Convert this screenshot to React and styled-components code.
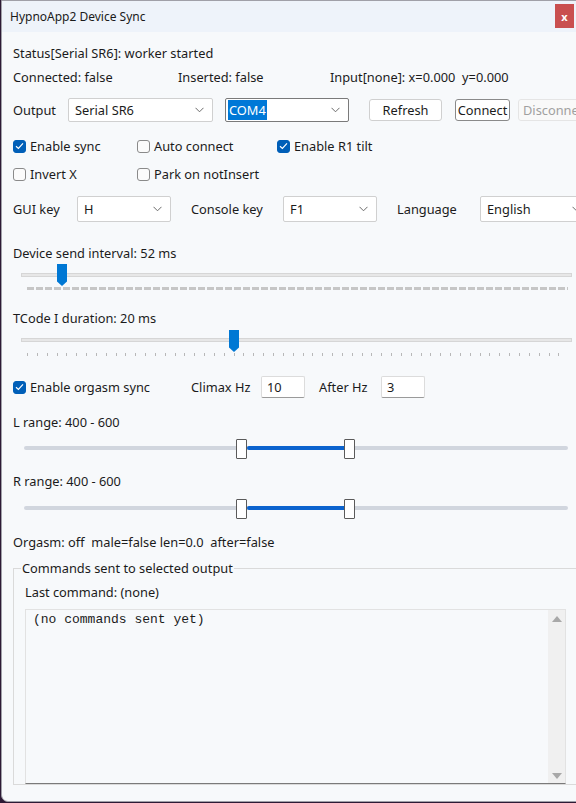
import React from 'react'
import styled, { createGlobalStyle } from 'styled-components'

const GlobalStyle = createGlobalStyle`
  html, body {
    margin: 0;
    padding: 0;
    background: #2d1a35;
    overflow: hidden;
  }
  body {
    font-family: "Noto Sans", "Open Sans", sans-serif;
    font-size: 12.8px;
    color: #1b1b1b;
  }
`

const Window = styled.div`
  margin-left: 1px;
  width: 620px;
  height: 800px;
  background: #f7f9fb;
  border: 1px solid #a0a0a8;
  border-radius: 0 0 7px 7px;
  display: flex;
  flex-direction: column;
  overflow: hidden;
`

const TitleBar = styled.div`
  height: 31px;
  background: #eef3fa;
  display: flex;
  align-items: center;
  padding-left: 8px;
  font-size: 12px;
  position: relative;
`

const CloseBtn = styled.div`
  position: absolute;
  left: 553px;
  top: 3px;
  width: 19px;
  height: 24px;
  background: #c94f4f;
  color: #fff;
  font-size: 11px;
  font-weight: bold;
  display: flex;
  align-items: center;
  justify-content: center;
`

const Content = styled.div`
  display: flex;
  flex-direction: column;
  padding: 0 0 0 11px;
`

const Row = styled.div`
  display: flex;
  align-items: center;
  height: ${p => p.$h || 18}px;
  margin-top: ${p => p.$mt || 0}px;
  white-space: nowrap;
`

const Cell = styled.div`
  width: ${p => p.$w}px;
  flex-shrink: 0;
  white-space: nowrap;
`

const Select = styled.div`
  width: ${p => p.$w}px;
  height: ${p => p.$h || 24}px;
  flex-shrink: 0;
  box-sizing: border-box;
  background: #fff;
  border: 1px solid ${p => (p.$focus ? '#7a7a7a' : '#d0d0d0')};
  border-radius: 2px;
  display: flex;
  align-items: center;
  justify-content: space-between;
  padding: 0 8px 0 ${p => (p.$focus ? 2 : 6)}px;
  margin-right: ${p => p.$mr || 0}px;
`

const Highlight = styled.span`
  background: #0078d7;
  color: #fff;
  padding: 1px 1px;
`

const Button = styled.div`
  height: 22px;
  box-sizing: border-box;
  width: ${p => p.$w}px;
  flex-shrink: 0;
  border: 1px solid ${p => (p.$focus ? '#8a8a8a' : p.$disabled ? '#e5e5e5' : '#d0d0d0')};
  border-radius: 3px;
  background: ${p => (p.$disabled ? '#f9f9f9' : '#fff')};
  color: ${p => (p.$disabled ? '#a0a0a0' : '#1b1b1b')};
  display: flex;
  align-items: center;
  justify-content: ${p => (p.$disabled ? 'flex-start' : 'center')};
  padding-left: ${p => (p.$disabled ? 4 : 0)}px;
  margin-right: ${p => p.$mr || 0}px;
  white-space: nowrap;
  overflow: hidden;
`

const CheckItem = styled.label`
  display: flex;
  align-items: center;
  gap: 4px;
  width: ${p => p.$w}px;
  flex-shrink: 0;
  white-space: nowrap;
`

const Box = styled.span`
  width: 13px;
  height: 13px;
  box-sizing: border-box;
  border-radius: 3px;
  border: 1px solid ${p => (p.$on ? '#005fb8' : '#8a8a8a')};
  background: ${p => (p.$on ? '#005fb8' : '#fbfbfb')};
  display: flex;
  align-items: center;
  justify-content: center;
`

const SliderWrap = styled.div`
  position: relative;
  height: ${p => p.$h}px;
  margin-top: ${p => p.$mt || 0}px;
`

const Track = styled.div`
  position: absolute;
  left: ${p => p.$l}px;
  width: ${p => p.$w}px;
  top: ${p => p.$t}px;
  height: 4px;
  box-sizing: border-box;
  background: ${p => p.$c || '#e7e7e7'};
  border: ${p => (p.$plain ? 'none' : '1px solid #d6d6d6')};
  border-radius: ${p => (p.$plain ? 2 : 0)}px;
`

const Ticks = styled.div`
  position: absolute;
  left: 14px;
  width: 541px;
  top: ${p => p.$t}px;
  height: 3px;
  background: ${p =>
    p.$dense
      ? 'repeating-linear-gradient(90deg, #c6c6c6 0 7px, transparent 7px 9px)'
      : 'repeating-linear-gradient(90deg, #b8b8b8 0 1px, transparent 1px 9.84px)'};
`

const Thumb = styled.div`
  position: absolute;
  top: ${p => p.$t}px;
  width: 10px;
  height: 22px;
  background: #0078d4;
  clip-path: polygon(0 0, 100% 0, 100% 80%, 50% 100%, 0 80%);
`

const RangeThumb = styled.div`
  position: absolute;
  top: ${p => p.$t}px;
  width: 11px;
  height: 20px;
  box-sizing: border-box;
  background: #fff;
  border: 1px solid #5a5a5a;
  border-radius: 1px;
`

const NumInput = styled.div`
  width: ${p => p.$w}px;
  height: 22px;
  box-sizing: border-box;
  background: #fff;
  border: 1px solid #dcdcdc;
  border-bottom-color: #9a9a9a;
  border-radius: 2px;
  padding-left: 5px;
  display: flex;
  align-items: center;
  flex-shrink: 0;
`

const Group = styled.fieldset`
  margin: 8px 0 0 0;
  padding: 0 0 0 11px;
  border: 1px solid #dadada;
  border-right: none;
  display: flex;
  flex-direction: column;
`

const Legend = styled.legend`
  padding: 0 1px;
  margin-left: -4px;
  font-size: 12.8px;
`

const LogBox = styled.div`
  margin-top: 8px;
  width: 541px;
  height: 175px;
  box-sizing: border-box;
  border: 1px solid #e2e2e2;
  border-bottom: 1px solid #7a7a7a;
  display: flex;
`

const LogText = styled.div`
  flex: 1;
  padding: 2px 0 0 7px;
  font-family: "Liberation Mono", "Courier New", monospace;
  font-size: 13px;
`

const ScrollBar = styled.div`
  width: 17px;
  background: #f0f0f0;
  display: flex;
  flex-direction: column;
  justify-content: space-between;
  align-items: center;
  padding: 6px 0 4px;
`

const Arrow = styled.span`
  width: 0;
  height: 0;
  border-left: 5px solid transparent;
  border-right: 5px solid transparent;
  ${p => (p.$up ? 'border-bottom: 6px solid #a8a8a8;' : 'border-top: 6px solid #a8a8a8;')}
`

const Chevron = () => (
  <svg width="9" height="6" viewBox="0 0 9 6">
    <path d="M0.5 0.8 L4.5 4.8 L8.5 0.8" fill="none" stroke="#6b6b6b" strokeWidth="1" />
  </svg>
)

const Check = ({ on, children, w }) => (
  <CheckItem $w={w}>
    <Box $on={on}>
      {on && (
        <svg width="9" height="8" viewBox="0 0 9 8">
          <path d="M1 4.2 L3.4 6.4 L8 1.4" fill="none" stroke="#fff" strokeWidth="1.2" />
        </svg>
      )}
    </Box>
    {children}
  </CheckItem>
)

const Range = ({ mt }) => (
  <SliderWrap $h={22} $mt={mt}>
    <Track $l={11} $w={544} $t={8} $c="#d1d6de" $plain />
    <Track $l={234} $w={108} $t={8} $c="#0b63ce" $plain />
    <RangeThumb $t={1} style={{ left: 223 }} />
    <RangeThumb $t={1} style={{ left: 331 }} />
  </SliderWrap>
)

export default function App() {
  return (
    <>
      <GlobalStyle />
      <Window>
        <TitleBar>
          HypnoApp2 Device Sync
          <CloseBtn>x</CloseBtn>
        </TitleBar>
        <Content>
          <Row $mt={12}>Status[Serial SR6]: worker started</Row>
          <Row $mt={6}>
            <Cell $w={165}>Connected: false</Cell>
            <Cell $w={152}>Inserted: false</Cell>
            <Cell>Input[none]: x=0.000&nbsp; y=0.000</Cell>
          </Row>
          <Row $h={24} $mt={12}>
            <Cell $w={55}>Output</Cell>
            <Select $w={145} $mr={12}>Serial SR6<Chevron /></Select>
            <Select $w={124} $mr={20} $focus><Highlight>COM4</Highlight><Chevron /></Select>
            <Button $w={73} $mr={13}>Refresh</Button>
            <Button $w={55} $mr={8} $focus>Connect</Button>
            <Button $w={80} $disabled>Disconnect</Button>
          </Row>
          <Row $mt={15}>
            <Check w={124} on>Enable sync</Check>
            <Check w={140}>Auto connect</Check>
            <Check on>Enable R1 tilt</Check>
          </Row>
          <Row $mt={10}>
            <Check w={124}>Invert X</Check>
            <Check w={140}>Park on notInsert</Check>
          </Row>
          <Row $h={26} $mt={13}>
            <Cell $w={64}>GUI key</Cell>
            <Select $w={94} $h={26} $mr={20}>H<Chevron /></Select>
            <Cell $w={92}>Console key</Cell>
            <Select $w={94} $h={26} $mr={20}>F1<Chevron /></Select>
            <Cell $w={83}>Language</Cell>
            <Select $w={110} $h={26}>English<Chevron /></Select>
          </Row>
          <Row $mt={22}>Device send interval: 52 ms</Row>
          <SliderWrap $h={32} $mt={1}>
            <Track $l={8} $w={551} $t={10} />
            <Thumb $t={1} style={{ left: 44 }} />
            <Ticks $t={24} $dense />
          </SliderWrap>
          <Row $mt={14}>TCode I duration: 20 ms</Row>
          <SliderWrap $h={30} $mt={2}>
            <Track $l={8} $w={551} $t={9} />
            <Thumb $t={1} style={{ left: 216 }} />
            <Ticks $t={24} />
          </SliderWrap>
          <Row $h={22} $mt={17}>
            <Check w={178} on>Enable orgasm sync</Check>
            <Cell $w={70}>Climax Hz</Cell>
            <NumInput $w={44}>10</NumInput>
            <Cell $w={14} />
            <Cell $w={62}>After Hz</Cell>
            <NumInput $w={44}>3</NumInput>
          </Row>
          <Row $mt={15}>L range: 400 - 600</Row>
          <Range mt={7} />
          <Row $mt={12}>R range: 400 - 600</Row>
          <Range mt={8} />
          <Row $mt={13}>Orgasm: off&nbsp; male=false len=0.0&nbsp; after=false</Row>
          <Group>
            <Legend>Commands sent to selected output</Legend>
            <Row $mt={6}>Last command: (none)</Row>
            <LogBox>
              <LogText>(no commands sent yet)</LogText>
              <ScrollBar>
                <Arrow $up />
                <Arrow />
              </ScrollBar>
            </LogBox>
          </Group>
        </Content>
      </Window>
    </>
  )
}
